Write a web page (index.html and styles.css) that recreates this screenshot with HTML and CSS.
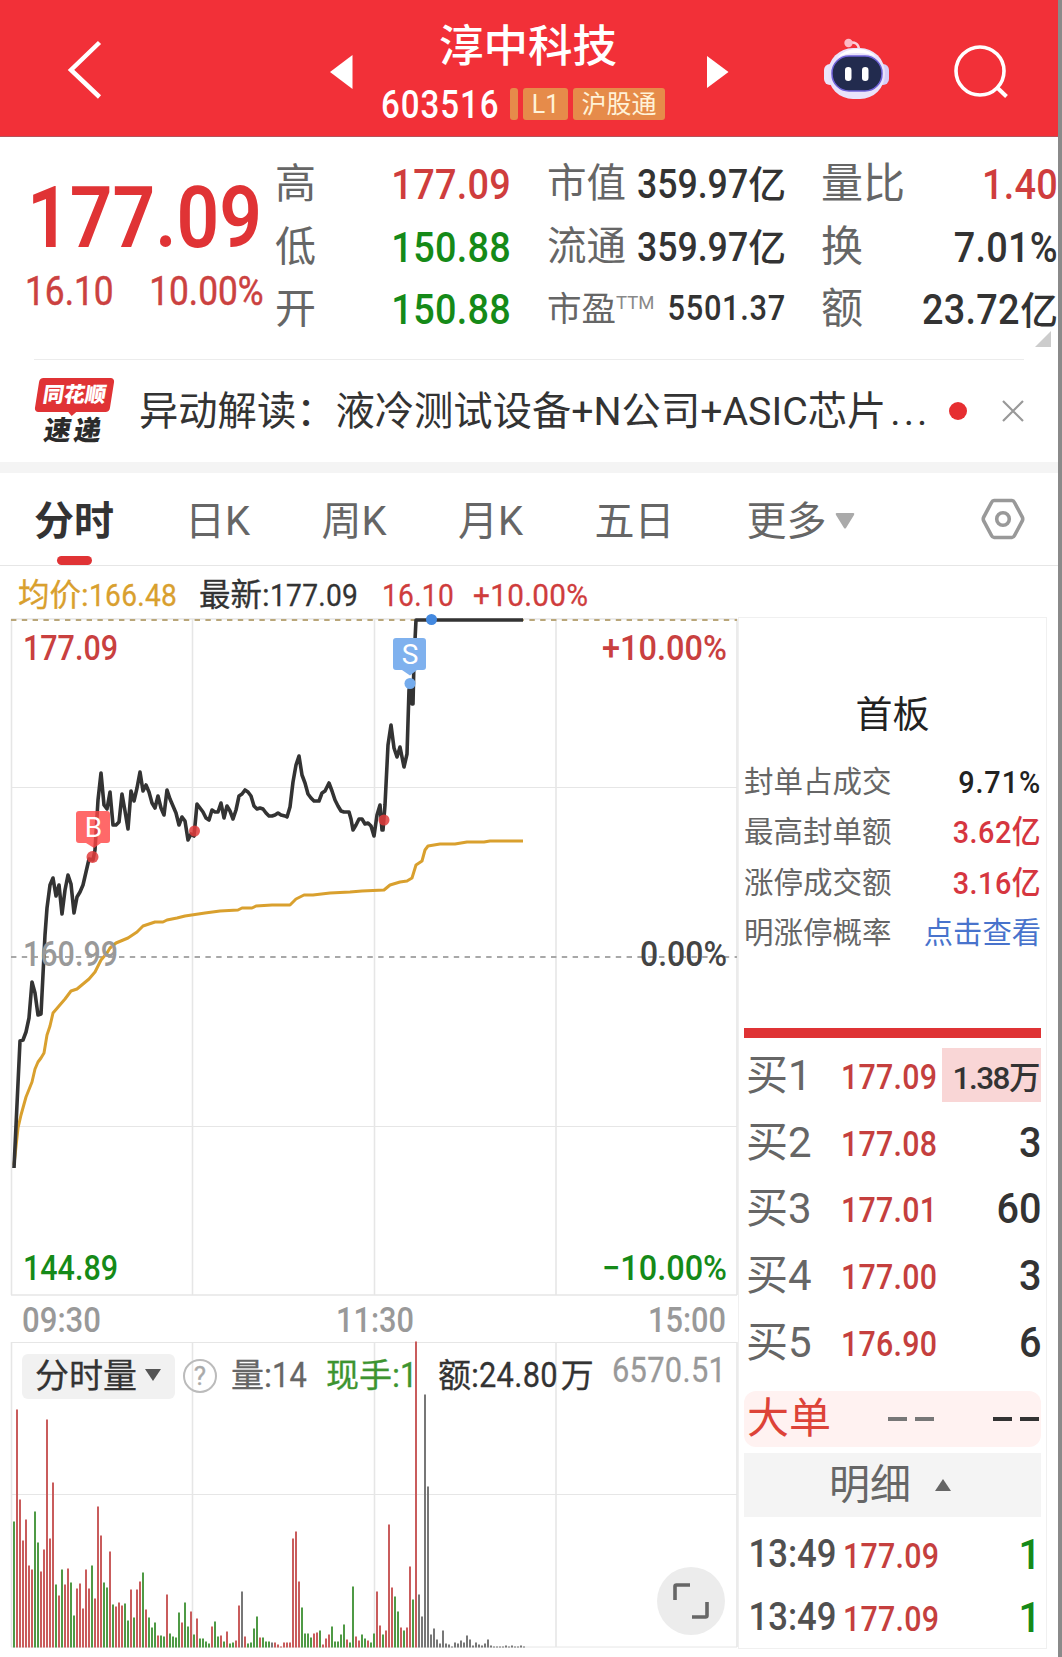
FILE: index.html
```html
<!DOCTYPE html>
<html lang="zh-CN">
<head>
  <meta charset="UTF-8" />
  <meta name="viewport" content="width=device-width, initial-scale=1.0"/>
  <title>淳中科技 603516</title>
  <link rel="stylesheet" href="styles.css">
</head>
<body>
  <header class="top-bar">
    <svg class="back-btn" width="38" height="62" viewBox="0 0 38 62"><path d="M33.500 4.500 L5 32 L33.500 59" fill="none" stroke="#fff" stroke-width="4.500"/></svg>
    <svg class="prev-btn" width="23" height="34" viewBox="0 0 23 34"><path d="M0 17 L22.500 0 V34 Z" fill="#fff"/></svg>
    <div class="stock">
      <h1>淳中科技</h1>
      <div class="stock-code">
        <span class="code">603516</span>
        <span class="tag tag-line"></span>
        <span class="tag tag-l1">L1</span>
        <span class="tag tag-hgt">沪股通</span>
      </div>
    </div>
    <svg class="next-btn" width="22" height="34" viewBox="0 0 22 34"><path d="M0 1 L21.500 17 L0 33 Z" fill="#fff"/></svg>
    <svg class="robot" width="69" height="62" viewBox="0 0 69 62">
      <path d="M27 5 Q36 3 37 11" fill="none" stroke="#fbd0da" stroke-width="2.500"/>
      <circle cx="26.500" cy="5" r="4.200" fill="#fdb9c6"/>
      <rect x="2" y="26" width="12" height="21" rx="6" fill="#ece5fb"/>
      <rect x="55" y="26" width="12" height="21" rx="6" fill="#d5cdf8"/>
      <rect x="6" y="10" width="57" height="51" rx="25" fill="#e9e3fb"/>
      <path d="M15 20 Q22 11 36 11 Q47 11 54 19 Q47 15 35 15 Q23 15 15 20" fill="#fff"/>
      <rect x="10" y="18" width="50" height="35" rx="17" fill="#222b4e" stroke="#6f62d8" stroke-width="1.500"/>
      <rect x="23" y="29" width="6.500" height="14" rx="3.200" fill="#fff"/>
      <rect x="40" y="29" width="6.500" height="14" rx="3.200" fill="#fff"/>
    </svg>
    <svg class="search-btn" width="58" height="60" viewBox="0 0 58 60"><circle cx="27" cy="29" r="24" fill="none" stroke="#fff" stroke-width="3.600"/><path d="M43.500 45 L53.500 54.500" stroke="#fff" stroke-width="4"/></svg>
  </header>

  <section class="quote">
    <div class="price">
      <div class="price-now num">177.09</div>
      <div class="price-change"><span class="num">16.10</span><span class="num num-r">10.00%</span></div>
    </div>
    <dl class="stat stat-range">
      <dt>高</dt><dd class="red">177.09</dd>
      <dt>低</dt><dd class="green">150.88</dd>
      <dt>开</dt><dd class="green">150.88</dd>
    </dl>
    <dl class="stat stat-cap">
      <dt>市值</dt><dd>359.97<i>亿</i></dd>
      <dt>流通</dt><dd>359.97<i>亿</i></dd>
      <dt class="small">市盈<sup>TTM</sup></dt><dd class="small">5501.37</dd>
    </dl>
    <dl class="stat stat-vol">
      <dt>量比</dt><dd class="red">1.40</dd>
      <dt>换</dt><dd>7.01%</dd>
      <dt>额</dt><dd>23.72<i>亿</i></dd>
    </dl>
    <span class="corner"></span>
  </section>

  <section class="news">
    <div class="news-logo"><b>同花顺</b><em>速递</em></div>
    <p>异动解读：<span>液冷测试设备+N公司+ASIC芯片</span><span class="dots">...</span></p>
    <span class="dot"></span>
    <svg class="close" width="22" height="22" viewBox="0 0 22 22"><path d="M1 1 L21 21 M21 1 L1 21" stroke="#999" stroke-width="2.200"/></svg>
  </section>

  <nav class="tabs">
    <a class="active">分时</a>
    <a>日K</a>
    <a>周K</a>
    <a>月K</a>
    <a>五日</a>
    <a>更多<svg width="20" height="16" viewBox="0 0 20 16"><path d="M1.500 0 H18.500 Q20 .5 19 2 L11 15 Q10 16 9 15 L1 2 Q0 .5 1.500 0" fill="#aaa"/></svg></a>
    <svg class="setting" width="44" height="42" viewBox="0 0 44 42"><path d="M13 2.500 H31 Q32.500 2.500 33.500 4.500 L41 18.500 Q42.500 21 41 23.500 L33.500 37.500 Q32.500 39.500 31 39.500 H13 Q11.500 39.500 10.500 37.500 L3 23.500 Q1.500 21 3 18.500 L10.500 4.500 Q11.500 2.500 13 2.500 Z" fill="none" stroke="#999" stroke-width="3.600"/><circle cx="22" cy="21" r="6.300" fill="none" stroke="#999" stroke-width="3.600"/></svg>
  </nav>

  <div class="legend">
    <span class="avg">均价:<span class="num">166.48</span></span>
    <span class="last">最新:<span class="num">177.09</span></span>
    <span class="red diff"><span class="num">16.10</span></span>
    <span class="red"><span class="num">+10.00%</span></span>
  </div>

  <main class="content">
    <div class="charts">
      <svg class="minute" width="738" height="725" viewBox="0 617 738 725">
        <g class="grid">
          <path d="M11.500 619 V1295 M192.500 619 V1295 M374.500 619 V1295 M556 619 V1295 M737 619 V1295" stroke-width="1.600"/>
          <path d="M11 787.500 H737 M11 1126.500 H737"/>
          <path d="M11 619 H737 M11 1295 H737" stroke-width="1.600"/>
        </g>
        <path class="dash gold" d="M11 620 H737"/>
        <path class="dash" d="M11 957 H737"/>
        <polyline class="avg-line" id="avgLine"/>
        <polyline class="price-line" id="priceLine"/>
        <g fill="#e23c3c" fill-opacity=".85">
          <circle cx="194.500" cy="831" r="5.500"/>
          <circle cx="384" cy="820" r="5.500"/>
          <circle cx="92.500" cy="857" r="6"/>
        </g>
        <g fill="#ff4444" fill-opacity=".8">
          <path d="M79 811 H107 Q110 811 110 814 V840 Q110 843 107 843 H101 L94 848 L86 843 H79 Q76 843 76 840 V814 Q76 811 79 811"/>
        </g>
        <path d="M396 638 H423 Q426 638 426 641 V667 Q426 670 423 670 H417 L410 675.500 L402 670 H396 Q393 670 393 667 V641 Q393 638 396 638" fill="#7fb1ee"/>
        <circle cx="410" cy="683.500" r="5.500" fill="#74abec"/>
        <circle cx="431.500" cy="619.500" r="5.500" fill="#4389e0"/>
        <text class="mark" x="93.500" y="837">B</text>
        <text class="mark" x="410" y="664">S</text>

        <g class="labels">
          <text class="t-red" x="23" y="660" textLength="95" lengthAdjust="spacingAndGlyphs">177.09</text>
          <text class="t-red" x="602" y="660" textLength="125" lengthAdjust="spacingAndGlyphs">+10.00%</text>
          <text class="t-grey" x="23" y="966" textLength="95" lengthAdjust="spacingAndGlyphs">160.99</text>
          <text class="t-dark" x="640" y="966" textLength="87" lengthAdjust="spacingAndGlyphs">0.00%</text>
          <text class="t-green" x="23" y="1280" textLength="95" lengthAdjust="spacingAndGlyphs">144.89</text>
          <text class="t-green" x="602" y="1280" textLength="125" lengthAdjust="spacingAndGlyphs">−10.00%</text>
          <text class="t-grey" x="22" y="1332" textLength="79" lengthAdjust="spacingAndGlyphs">09:30</text>
          <text class="t-grey" x="336" y="1332" textLength="78" lengthAdjust="spacingAndGlyphs">11:30</text>
          <text class="t-grey" x="648" y="1332" textLength="78" lengthAdjust="spacingAndGlyphs">15:00</text>
        </g>
      </svg>
      <div class="volume">
        <svg width="738" height="315" viewBox="0 1342 738 315">
          <g class="grid">
            <path d="M11.500 1342 V1647 M192.500 1342 V1647 M374.500 1342 V1647 M556 1342 V1647 M737 1342 V1647" stroke-width="1.600"/>
            <path d="M11 1342.500 H737 M11 1494.500 H737 M11 1647 H737"/>
          </g>
          <g id="bars"></g>
        </svg>
        <div class="volume-bar">
          <span class="picker">分时量<svg width="16" height="12" viewBox="0 0 16 12"><path d="M0 0 H16 L8 12 Z" fill="#555"/></svg></span>
          <span class="help">?</span>
          <span class="v-num">量:<span class="num">14</span></span>
          <span class="v-now">现手:<span class="num">1</span></span>
          <span class="v-sum">额:<span class="num v-amount">24.80</span>万</span>
          <span class="v-max num">6570.51</span>
        </div>
        <div class="fullscreen"><svg width="36" height="36" viewBox="0 0 36 36"><path d="M2 17 V3.500 Q2 2 3.500 2 H17 M34 19 V32.500 Q34 34 32.500 34 H19" fill="none" stroke="#666" stroke-width="3.600"/></svg></div>
      </div>
    </div>

    <aside class="side">
      <h2>首板</h2>
      <ul class="board">
        <li><span>封单占成交</span><b class="dark">9.71%</b></li>
        <li><span>最高封单额</span><b>3.62亿</b></li>
        <li><span>涨停成交额</span><b>3.16亿</b></li>
        <li><span>明涨停概率</span><a>点击查看</a></li>
      </ul>
      <div class="ratio"></div>
      <ul class="orders">
        <li><span class="label">买1</span><span class="value">177.09</span><span class="qty hot">1.38万</span></li>
        <li><span class="label">买2</span><span class="value">177.08</span><span class="qty">3</span></li>
        <li><span class="label">买3</span><span class="value">177.01</span><span class="qty">60</span></li>
        <li><span class="label">买4</span><span class="value">177.00</span><span class="qty">3</span></li>
        <li><span class="label">买5</span><span class="value">176.90</span><span class="qty">6</span></li>
      </ul>
      <div class="big-order">
        <span>大单</span>
        <i class="dashes"></i>
        <i class="dashes black"></i>
      </div>
      <div class="detail-head">明细<svg width="16" height="12" viewBox="0 0 16 12"><path d="M8 0 L16 12 H0 Z" fill="#666"/></svg></div>
      <ul class="details">
        <li><span class="time">13:49</span><span class="value">177.09</span><span class="qty green">1</span></li>
        <li><span class="time">13:49</span><span class="value">177.09</span><span class="qty green">1</span></li>
      </ul>
    </aside>
  </main>

  <script>
    // 分时价格线
    const price = [
      14,1168, 20,1041, 23,1040, 26,1032, 29,1018, 32,982, 35,993, 38,1015, 41,1014, 45,935, 47,908, 50,885, 53,878,
      56,896, 59,885, 62,914, 65,890, 68,875, 71,884, 74,913, 77,897, 80,892, 83,885, 86,872, 89,859, 93,860, 95,850,
      98,800, 101,773, 104,805, 107,809, 110,792, 113,825, 116,825, 119,822, 122,794, 125,811, 128,829, 131,791,
      134,801, 137,788, 140,772, 143,791, 146,785, 149,792, 152,803, 155,808, 158,796, 161,808, 164,815, 167,790,
      170,799, 173,806, 176,813, 179,825, 182,817, 185,821, 188,840, 191,834, 194,836, 197,804, 200,808, 203,812,
      206,818, 209,820, 212,810, 215,812, 218,812, 221,803, 224,818, 227,806, 230,811, 233,819, 236,810, 239,796,
      242,794, 245,790, 248,792, 251,796, 254,806, 257,809, 260,808, 263,809, 266,813, 269,816, 272,816, 275,815,
      278,813, 281,815, 285,816, 287,817, 290,807, 293,782, 296,765, 299,756, 302,775, 305,783, 308,794, 311,798,
      314,801, 319,801, 322,793, 325,791, 329,783, 332,791, 335,800, 338,806, 341,811, 344,812, 349,812, 351,819,
      353,830, 356,825, 359,819, 362,819, 365,824, 368,823, 371,826, 374,836, 377,815, 380,805, 382,830, 383,830,
      385,805, 388,745, 391,725, 394,748, 397,757, 400,747, 404,767, 407,754, 409,690, 411,683, 412,704, 413,704,
      414,660, 415,640, 416,620, 523,620
    ];
    // 均价线
    const avg = [
      14,1165, 18,1128, 21,1115, 26,1097, 32,1082, 35,1069, 38,1062, 41,1058, 44,1053, 47,1035, 50,1026, 53,1013,
      59,1006, 65,999, 71,991, 77,989, 83,984, 89,979, 95,972, 101,960, 107,953, 110,948, 116,943, 128,938, 137,932,
      143,926, 149,924, 155,922, 163,922, 167,920, 177,918, 185,916, 205,913, 220,911, 238,910, 242,908, 252,908,
      256,906, 272,905, 290,905, 296,899, 304,895, 313,895, 330,893, 350,892, 362,891, 384,890, 390,885, 400,882,
      407,881, 412,878, 416,865, 422,861, 425,850, 428,846, 440,844, 455,844, 467,842, 484,842, 490,841, 523,841
    ];
    document.getElementById('priceLine').setAttribute('points', price.join(' '));
    document.getElementById('avgLine').setAttribute('points', avg.join(' '));

    // 成交量：r 涨 g 跌 k 平
    const volumes = 'g126 r238 r148 r107 r128 r82 r78 g136 g105 r76 r98 r228 r109 r165 g63 r52 g78 r63 r79 g65 g32 r59 r64 r39 r78 r59 g82 r49 r141 r112 g65 g60 r96 g43 r41 r45 r42 g44 g27 r58 g30 r58 r66 g75 r38 g30 g20 g25 r12 g12 g11 r53 g14 g11 g10 g35 r25 g45 g21 r36 g13 r29 g9 g9 g6 g4 r21 g26 g11 r12 g6 r16 g4 g5 r7 r42 k56 r11 g4 g5 g19 g31 r10 g10 g6 g6 k5 r5 r3 r1 r5 r5 r5 r109 r116 r66 g40 g14 g14 g10 r14 r15 g17 r3 r9 r13 g21 g6 g6 g13 g23 r8 g5 g61 r11 r7 g13 g9 r7 g5 g14 r56 r22 g13 r17 r123 r60 g51 g36 r20 g17 r20 r81 g48 r306 k53 k31 k253 k161 k13 k19 k8 k4 k17 k4 k3 k1 k5 k4 k7 k5 k12 k8 k2 k5 k3 k2 k4 k8 k2 k1 k1 k1 k1 k2 k1 k2 k1 k1 k2 k1'.split(' ');
    const bars = document.getElementById('bars');
    volumes.forEach((v, i) => {
      const h = Number(v.slice(1));
      const rect = document.createElementNS('http://www.w3.org/2000/svg', 'rect');
      rect.setAttribute('class', 'bar-' + v[0]);
      rect.setAttribute('x', 13 + i * 3);
      rect.setAttribute('y', 1647.5 - h);
      rect.setAttribute('width', 2);
      rect.setAttribute('height', h);
      bars.appendChild(rect);
    });
  </script>
</body>
</html>
```

FILE: styles.css
```css
* { box-sizing: border-box; margin: 0; padding: 0; }
body {
  font-family: Roboto, 'Noto Sans CJK SC', sans-serif;
  background: #fff;
  color: #333;
  width: 1062px;
  height: 1657px;
  overflow: hidden;
  border-right: 4px solid #8a8a8a;
}
ul { list-style: none; }
i, em { font-style: normal; }
.red { color: #cf3d3d; }
.green { color: #158a18; }
/* 窄体数字 */
.num {
  display: inline-block;
  transform: scaleX(.88);
  transform-origin: left;
  letter-spacing: .01em;
}
.num-r { transform-origin: right; }

/* 顶部栏 */
.top-bar {
  display: flex;
  align-items: flex-start;
  height: 137px;
  background: #f23038;
  border-bottom: 1px solid #b5525a;
  color: #fff;
}
.top-bar > * { flex: none; }
.back-btn { margin: 38px 0 0 66px; }
.prev-btn { margin: 55px 0 0 226px; }
.stock {
  width: 303px;
  margin: 21px 0 0 28px;
}
.stock h1 {
  font-size: 44.500px;
  font-weight: 500;
  line-height: 52px;
  padding-left: 58px;
}
.stock-code {
  display: flex;
  align-items: center;
  height: 32px;
  margin-top: 15px;
}
.code {
  font-size: 38px;
  font-weight: 500;
  letter-spacing: 1.100px;
  line-height: 36px;
  width: 129px;
  padding-top: 2px;
  transform: scaleX(.87);
  transform-origin: left;
}
.tag {
  height: 32px;
  line-height: 33px;
  border-radius: 3px;
  background: #e68b4a;
  color: #fff2d8;
  font-size: 25px;
  text-align: center;
}
.tag-line { width: 8px; }
.tag-l1 { width: 45px; margin-left: 5px; }
.tag-hgt { width: 92px; margin-left: 5px; }
.next-btn { margin: 55px 0 0 23px; }
.robot { margin: 38px 0 0 93px; }
.search-btn { margin: 42px 0 0 62px; }

/* 行情 */
.quote {
  position: relative;
  display: flex;
  height: 223px;
  padding-top: 16px;
}
.quote::after {
  content: '';
  position: absolute;
  left: 34px;
  right: 34px;
  bottom: 0;
  height: 1px;
  background: #ececec;
}
.price { width: 275px; color: #e03335; }
.price-now {
  display: block;
  font-size: 85px;
  font-weight: 600;
  line-height: 100px;
  letter-spacing: 0;
  padding-top: 15px;
  margin-left: 27px;
}
.price-change {
  display: flex;
  justify-content: space-between;
  padding: 0 17px 0 25px;
  margin-top: -2px;
  font-size: 41.500px;
  line-height: 50px;
  color: #cb4140;
  -webkit-text-stroke: .5px;
}
.price-change .num { letter-spacing: 0; transform: scaleX(.85); }
.price-change .num-r { margin-right: 0; }
.stat {
  display: grid;
  grid-template-columns: 78px 1fr;
  grid-auto-rows: 62.500px;
  line-height: 62px;
  font-size: 41px;
}
.stat dt { color: #666; white-space: nowrap; }
.stat dd {
  font-size: 43px;
  font-weight: 500;
  text-align: right;
  letter-spacing: .3px;
  white-space: nowrap;
  transform: scaleX(.88);
  transform-origin: right;
}
.stat dd i {
  display: inline-block;
  margin-left: 5px;
  font-size: 38px;
  transform: scaleX(1.13);
  transform-origin: right;
}
.stat-range { width: 236px; }
.stat-cap {
  grid-template-columns: 60px 1fr;
  width: 239px;
  margin-left: 36px;
  font-size: 39.500px;
}
.stat-cap dd { font-size: 40.500px; letter-spacing: 0; }
.stat-cap dt.small { font-size: 34.500px; }
.stat-cap dd.small { font-size: 35px; letter-spacing: .8px; }
.stat sup {
  font-size: 18.500px;
  line-height: 0;
  vertical-align: 12px;
  color: #888;
}
.stat-vol { width: 237px; margin-left: 35px; font-size: 42px; }
.corner {
  position: absolute;
  right: 7px;
  bottom: 13px;
  border-left: 16px solid transparent;
  border-bottom: 16px solid #ccc;
}

/* 异动解读 */
.news {
  display: flex;
  align-items: center;
  height: 113px;
  padding-left: 35px;
  padding-bottom: 11px;
  background: linear-gradient(#fff 102px, #f4f4f4 102px);
}
.news-logo {
  width: 80px;
  height: 66px;
  text-align: center;
}
.news-logo b {
  position: relative;
  display: block;
  width: 75px;
  height: 34px;
  margin-left: 2px;
  border-radius: 4px;
  background: #e03335;
  color: #fff;
  font-size: 21px;
  font-weight: 900;
  line-height: 34px;
  transform: skewX(-9deg);
}
.news-logo b::after {
  content: '';
  position: absolute;
  left: 33px;
  top: 33px;
  border: 5px solid transparent;
  border-top-color: #e03335;
}
.news-logo em {
  display: block;
  color: #2b2b2b;
  font-size: 27px;
  font-weight: 900;
  line-height: 39px;
  letter-spacing: 3px;
  margin-left: -2px;
  transform: skewX(-9deg);
}
.news p {
  width: 790px;
  margin-left: 24px;
  padding-bottom: 7px;
  font-size: 39.300px;
  white-space: nowrap;
}
.news .dots { letter-spacing: 3px; margin-left: 4px; }
.news .dot {
  width: 18px;
  height: 18px;
  margin-left: 20px;
  border-radius: 50%;
  background: #e62e31;
}
.news .close { margin-left: 35px; }

/* 周期切换 */
.tabs {
  display: flex;
  align-items: center;
  height: 93px;
  padding: 0 0 0 34px;
  border-bottom: 1px solid #e6e6e6;
  font-size: 40px;
  line-height: 97px;
  color: #666;
}
.tabs a { width: 136.500px; height: 92px; white-space: nowrap; }
.tabs a:first-child { width: 151px; }
.tabs a:nth-child(5) { width: 152px; }
.tabs a:nth-child(6) { width: 234px; }
.tabs a svg { margin-left: 8px; vertical-align: 6px; }
.tabs .active {
  position: relative;
  font-weight: 700;
  color: #333;
}
.tabs .active::after {
  content: '';
  position: absolute;
  left: 23px;
  bottom: 0;
  width: 35px;
  height: 9px;
  border-radius: 5px;
  background: #e03335;
}

/* 均价/最新 */
.legend {
  display: flex;
  height: 51px;
  padding-left: 18px;
  font-size: 31.500px;
  line-height: 58px;
  -webkit-text-stroke: .3px;
  white-space: nowrap;
}
.legend .num { font-size: 32px; letter-spacing: .3px; }
.legend .avg { width: 181px; color: #d9a02e; }
.legend .last { width: 183px; }
.legend .diff { width: 91px; }
.legend .red:last-child .num { transform: scaleX(.93); }

.content { display: flex; height: 1040px; }
.charts { width: 738px; }
.charts svg { display: block; overflow: visible; }
.grid { fill: none; stroke: #e6e6e6; }
.dash {
  fill: none;
  stroke: #a8a8a8;
  stroke-width: 1.800;
  stroke-dasharray: 5.400 5.400;
}
.dash.gold { stroke: #b9a679; }
.price-line, .avg-line {
  fill: none;
  stroke: #333;
  stroke-width: 3.600;
  stroke-linejoin: round;
}
.avg-line { stroke: #d9a02e; stroke-width: 3; }
.mark { font-size: 28px; fill: #fff; text-anchor: middle; }
.labels { font-size: 34.500px; font-weight: 500; }
.t-red { fill: #c9403f; }
.t-green { fill: #158a18; }
.t-grey { fill: #999; }
.t-dark { fill: #444; }
.bar-r { fill: #c95c5c; }
.bar-g { fill: #4f9a45; }
.bar-k { fill: #777; }

/* 成交量 */
.volume { position: relative; }
.volume-bar {
  position: absolute;
  top: 11px;
  left: 22px;
  display: flex;
  align-items: center;
  height: 46px;
  font-size: 33px;
  line-height: 46px;
  -webkit-text-stroke: .3px;
  white-space: nowrap;
}
.volume-bar .num { font-size: 35px; }
.v-amount { margin-right: -8px; }
.picker {
  width: 153px;
  height: 45px;
  padding-left: 13px;
  border-radius: 6px;
  background: #f1f1f1;
  font-size: 34px;
  line-height: 44px;
}
.volume-bar .picker svg { display: inline-block; margin-left: 8px; vertical-align: 7px; }
.help {
  width: 34px;
  height: 34px;
  margin: 0 14px 0 8px;
  border: 2px solid #bbb;
  border-radius: 50%;
  color: #aaa;
  font-size: 26px;
  line-height: 31px;
  text-align: center;
}
.v-num { width: 95px; color: #666; }
.v-now { width: 112px; color: #3d9430; }
.v-sum { width: 174px; }
.v-max {
  color: #999;
  margin-top: -11px;
}
.fullscreen {
  position: absolute;
  left: 657px;
  top: 225px;
  width: 68px;
  height: 68px;
  padding: 16px;
  border-radius: 50%;
  background: #ececec;
}

/* 右侧盘口 */
.side {
  width: 309px;
  height: 1032px;
  padding: 0 5px;
  border: 1px solid #f0f0f0;
}
.side h2 {
  margin-top: 71px;
  font-size: 37px;
  font-weight: 400;
  line-height: 54px;
  text-align: center;
  color: #222;
}
.board { height: 268px; padding-top: 14px; }
.board li {
  display: flex;
  justify-content: space-between;
  font-size: 29.500px;
  line-height: 50.300px;
  color: #666;
}
.board b {
  font-size: 32px;
  font-weight: 500;
  color: #d63640;
  letter-spacing: .5px;
  transform: scaleX(.9);
  transform-origin: right;
}
.board b.dark { color: #222; letter-spacing: 1px; }
.board a { font-size: 29.300px; color: #4873cc; }
.ratio { height: 10px; margin-top: 17px; background: #df3335; }
.orders { padding-top: 4px; }
.orders li, .details li {
  display: flex;
  align-items: center;
  height: 66.600px;
}
.label {
  width: 97px;
  padding: 0 0 7px 2px;
  font-size: 42px;
  color: #666;
  white-space: nowrap;
}
.value {
  width: 101px;
  font-size: 34.500px;
  font-weight: 500;
  letter-spacing: .3px;
  color: #c53f3e;
  padding-top: 4px;
  transform: scaleX(.88);
  transform-origin: left;
}
.qty {
  width: 100px;
  font-size: 43px;
  font-weight: 500;
  text-align: right;
  transform: scaleX(.92);
  transform-origin: right;
}
.orders .hot {
  height: 54px;
  padding-right: 2px;
  background: #f9d6d6;
  font-size: 31.500px;
  line-height: 61px;
  letter-spacing: -1.500px;
  transform: none;
}
.big-order {
  display: flex;
  align-items: center;
  height: 56px;
  margin-top: 16px;
  padding-left: 3px;
  border-radius: 12px;
  background: #fff2f1;
  font-size: 42px;
  color: #dd4338;
}
.big-order span { padding-bottom: 8px; }
.dashes {
  width: 46px;
  height: 4px;
  margin-left: 57px;
  background: linear-gradient(90deg, #777 19px, transparent 19px 27px, #777 27px);
}
.dashes.black {
  margin-left: 59px;
  background: linear-gradient(90deg, #333 19px, transparent 19px 27px, #333 27px);
}
.detail-head {
  height: 64px;
  margin-top: 6px;
  padding-left: 85px;
  background: #f4f4f4;
  font-size: 41px;
  line-height: 65px;
  color: #666;
}
.detail-head svg { margin-left: 24px; vertical-align: 8px; }
.details { padding-top: 6px; }
.details li { height: 63px; }
.time {
  width: 99px;
  padding-left: 5px;
  font-size: 39px;
  font-weight: 500;
  color: #505050;
  transform: scaleX(.89);
  transform-origin: left;
}
.details .qty { width: 98px; color: #158a18; }
```
